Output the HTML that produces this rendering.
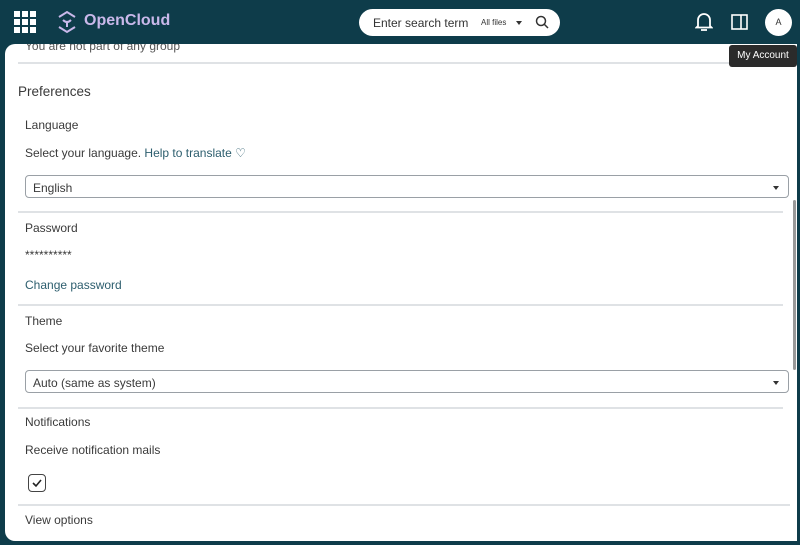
<!DOCTYPE html>
<html><head><style>
body{margin:0;width:800px;height:545px;background:#0e3c4a;font-family:"Liberation Sans",sans-serif;position:relative;overflow:hidden;color:#3a3a3a}
.a{position:absolute;white-space:nowrap}
.t{font-size:12px}
.panel{position:absolute;left:5px;top:44px;width:792px;height:497px;background:#fff;border-radius:10px 0 0 10px;overflow:hidden}
.hr{position:absolute;height:2px;background:#dfe2e5}
.sel{position:absolute;left:25px;width:764px;height:23px;border:1px solid #9aa0a6;border-radius:4px;box-sizing:border-box;font-size:12px;padding:5px 0 0 7px}
.sel:after{content:"";position:absolute;right:9px;top:10px;border:3.5px solid transparent;border-top:4px solid #333}
</style></head><body>
<div class="panel"></div>
<div class="a" style="left:14px;top:11px;width:22px;height:22px;display:grid;grid-template-columns:repeat(3,6px);gap:2px">
<i style="background:#fff"></i><i style="background:#fff"></i><i style="background:#fff"></i><i style="background:#fff"></i><i style="background:#fff"></i><i style="background:#fff"></i><i style="background:#fff"></i><i style="background:#fff"></i><i style="background:#fff"></i></div>
<svg class="a" style="left:57px;top:10px" width="20" height="24" viewBox="0 0 20 24" fill="none" stroke="#c9b8ea" stroke-width="2"><path d="M2 7L10 2L18 7M2 17L10 22L18 17"/><path d="M6 10Q10 14 14 10M10 12V17"/></svg>
<div class="a" style="left:84px;top:12px;font-size:16px;font-weight:bold;color:#c9b8ea">OpenCloud</div>
<div class="a" style="left:359px;top:9px;width:201px;height:27px;background:#fff;border-radius:14px"></div>
<div class="a" style="left:373px;top:16px;font-size:12px;color:#333">Enter search term</div>
<div class="a" style="left:481px;top:18px;font-size:8px;color:#333">All files</div>
<div class="a" style="left:516px;top:21px;border:3px solid transparent;border-top:4px solid #333"></div>
<svg class="a" style="left:535px;top:15px" width="14" height="14" viewBox="0 0 14 14" fill="none" stroke="#333" stroke-width="1.5"><circle cx="6" cy="6" r="4.5"/><path d="M9.5 9.5L13 13"/></svg>
<svg class="a" style="left:695px;top:12px" width="18" height="20" viewBox="0 0 18 20" fill="none" stroke="#fff" stroke-width="1.8"><path d="M3 14V8a6 6 0 0112 0v6l1.5 1.5h-15Z"/><path d="M6 18h6"/></svg>
<svg class="a" style="left:731px;top:14px" width="17" height="16" viewBox="0 0 17 16" fill="none" stroke="#fff" stroke-width="1.6"><rect x="1" y="1" width="15" height="14"/><path d="M10 1V15"/></svg>
<div class="a" style="left:765px;top:9px;width:27px;height:27px;border-radius:50%;background:#fff;font-size:9px;text-align:center;line-height:27px;color:#333">A</div>
<div class="a t" style="left:25px;top:39px;color:#555;clip-path:inset(5px 0 0 0)">You are not part of any group</div>
<div class="hr" style="left:18px;top:62px;width:772px"></div>
<div class="a" style="left:18px;top:84px;font-size:13.5px">Preferences</div>
<div class="a t" style="left:25px;top:118px">Language</div>
<div class="a t" style="left:25px;top:146px">Select your language. <span style="color:#2d5e6e">Help to translate ♡</span></div>
<div class="sel" style="top:175px">English</div>
<div class="hr" style="left:18px;top:211px;width:765px"></div>
<div class="a t" style="left:25px;top:221px">Password</div>
<div class="a t" style="left:25px;top:248px">**********</div>
<div class="a t" style="left:25px;top:278px;color:#2d5e6e">Change password</div>
<div class="hr" style="left:18px;top:304px;width:765px"></div>
<div class="a t" style="left:25px;top:314px">Theme</div>
<div class="a t" style="left:25px;top:341px">Select your favorite theme</div>
<div class="sel" style="top:370px">Auto (same as system)</div>
<div class="hr" style="left:18px;top:407px;width:765px"></div>
<div class="a t" style="left:25px;top:415px">Notifications</div>
<div class="a t" style="left:25px;top:443px">Receive notification mails</div>
<div class="a" style="left:28px;top:474px;width:18px;height:18px;border:1.5px solid #444;border-radius:4px;box-sizing:border-box"></div>
<svg class="a" style="left:31px;top:477px" width="12" height="12" viewBox="0 0 12 12" fill="none" stroke="#222" stroke-width="1.6"><path d="M2 6L5 9L10 3"/></svg>
<div class="hr" style="left:18px;top:504px;width:772px"></div>
<div class="a t" style="left:25px;top:513px">View options</div>
<div class="a" style="left:793px;top:200px;width:3px;height:170px;background:#999;border-radius:2px"></div>
<div class="a" style="left:729px;top:45px;width:68px;height:22px;background:#2b2b2b;border-radius:3px;color:#fff;font-size:10px;line-height:22px;text-align:center">My Account</div>
</body></html>
